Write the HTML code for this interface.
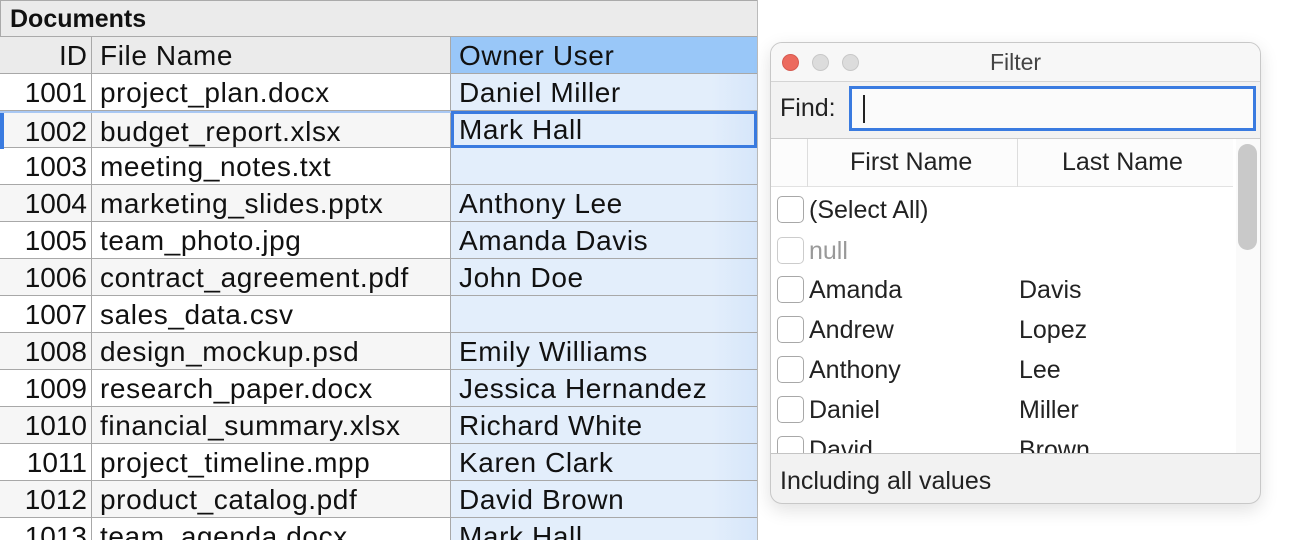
<!DOCTYPE html>
<html><head><style>
*{box-sizing:border-box;margin:0;padding:0}
html,body{width:1300px;height:540px;overflow:hidden}
body{background:#fff;position:relative;font-family:"Liberation Sans",sans-serif}
.tbl{position:absolute;left:0;top:0;width:758px;height:540px;border-right:1px solid #bbb;overflow:hidden}
.title{position:absolute;left:0;top:0;width:758px;height:37px;background:#ebebeb;border:1px solid #aaa;font-weight:bold;font-size:25px;padding:4px 9px;color:#111}
.row{position:absolute;left:0;width:757px;height:37px;border-bottom:1px solid #a8a8a8;font-size:28px;letter-spacing:0.6px;color:#111}
.row div{position:absolute;top:0;height:36px;line-height:37px;white-space:nowrap;overflow:hidden}
.c1{left:0;width:92px;text-align:right;padding-right:4px;border-right:1px solid #a8a8a8;letter-spacing:0}
.c2{left:92px;width:359px;padding-left:8px;border-right:1px solid #a8a8a8}
.c3{left:451px;width:306px;padding-left:8px;background:linear-gradient(90deg,#e3eefb 85%,#d6e6fa)}
.hdr{top:37px;background:#ebebeb}
.hdr .c3{background:#99c7f8}
.g{background:#f6f6f6}
.win{position:absolute;left:770px;top:42px;width:491px;height:462px;border:1px solid #c8c8c8;border-radius:12px;background:#f2f2f2;overflow:hidden;box-shadow:0 6px 18px rgba(0,0,0,.12);font-family:"Liberation Sans",sans-serif;color:#222}
.tb{height:39px;background:#f7f7f7;border-bottom:1px solid #d4d4d4;text-align:center;line-height:38px;font-size:23px;color:#444}
.dot{position:absolute;top:11px;width:17px;height:17px;border-radius:50%;background:#dcdcdc;border:1px solid #c8c8c8}
.find{position:absolute;top:40px;left:0;width:491px;height:54px;font-size:25px}
.list{position:absolute;top:95px;left:0;width:491px;height:316px;background:#fff;border-top:1px solid #ccc;border-bottom:1px solid #c4c4c4;overflow:hidden}
.it{position:absolute;left:0;width:460px;height:40px;font-size:25px;line-height:40px;white-space:nowrap}
.cb{position:absolute;left:6px;top:6px;width:27px;height:27px;border:1.5px solid #a8a8a8;border-radius:5px;background:#fff}
</style></head><body>
<div class="tbl">
<div class="title">Documents</div>
<div class="row hdr"><div class="c1">ID</div><div class="c2">File Name</div><div class="c3">Owner User</div></div>
<div class="row" style="top:74px"><div class="c1">1001</div><div class="c2">project_plan.docx</div><div class="c3">Daniel Miller</div></div>
<div class="row g" style="top:111px;border-top:2px solid #a9c8f3;height:37px"><div class="c1" style="border-left:4px solid #3a7be0">1002</div><div class="c2">budget_report.xlsx</div><div class="c3" style="border:3px solid #3a7be0;padding-left:5px;line-height:32px;height:37px;top:-2px">Mark Hall</div></div>
<div class="row" style="top:148px"><div class="c1">1003</div><div class="c2">meeting_notes.txt</div><div class="c3"></div></div>
<div class="row g" style="top:185px"><div class="c1">1004</div><div class="c2">marketing_slides.pptx</div><div class="c3">Anthony Lee</div></div>
<div class="row" style="top:222px"><div class="c1">1005</div><div class="c2">team_photo.jpg</div><div class="c3">Amanda Davis</div></div>
<div class="row g" style="top:259px"><div class="c1">1006</div><div class="c2">contract_agreement.pdf</div><div class="c3">John Doe</div></div>
<div class="row" style="top:296px"><div class="c1">1007</div><div class="c2">sales_data.csv</div><div class="c3"></div></div>
<div class="row g" style="top:333px"><div class="c1">1008</div><div class="c2">design_mockup.psd</div><div class="c3">Emily Williams</div></div>
<div class="row" style="top:370px"><div class="c1">1009</div><div class="c2">research_paper.docx</div><div class="c3">Jessica Hernandez</div></div>
<div class="row g" style="top:407px"><div class="c1">1010</div><div class="c2">financial_summary.xlsx</div><div class="c3">Richard White</div></div>
<div class="row" style="top:444px"><div class="c1">1011</div><div class="c2">project_timeline.mpp</div><div class="c3">Karen Clark</div></div>
<div class="row g" style="top:481px"><div class="c1">1012</div><div class="c2">product_catalog.pdf</div><div class="c3">David Brown</div></div>
<div class="row" style="top:518px"><div class="c1">1013</div><div class="c2">team_agenda.docx</div><div class="c3">Mark Hall</div></div>
</div>
<div class="win">
<div class="tb">Filter</div>
<div class="dot" style="left:11px;background:#ec6a5e;border-color:#d65a50"></div>
<div class="dot" style="left:41px"></div>
<div class="dot" style="left:71px"></div>
<div class="find"><span style="position:absolute;left:9px;top:11px">Find:</span>
<div style="position:absolute;left:78px;top:3px;width:407px;height:45px;border:3px solid #3a7be0;background:#fbfbfb"><div style="position:absolute;left:11px;top:6px;width:2px;height:28px;background:#222"></div></div></div>
<div class="list">
<div style="position:absolute;left:0;top:0;width:462px;height:48px;border-bottom:1px solid #e2e2e2;font-size:25px;background:#fcfcfc">
<div style="position:absolute;left:36px;top:0;height:48px;border-left:1px solid #ddd"></div>
<div style="position:absolute;left:246px;top:0;height:48px;border-left:1px solid #ddd"></div>
<div style="position:absolute;left:79px;top:9px">First Name</div>
<div style="position:absolute;left:291px;top:9px">Last Name</div></div>
<div style="position:absolute;left:465px;top:0;width:26px;height:316px;background:#fafafa"></div>
<div style="position:absolute;left:467px;top:5px;width:19px;height:106px;border-radius:10px;background:#c9c9c9"></div>
<div class="it" style="top:51px"><div class="cb"></div><span style="position:absolute;left:38px">(Select All)</span></div>
<div class="it" style="top:92px;color:#999"><div class="cb" style="border-color:#ccc"></div><span style="position:absolute;left:38px">null</span></div>
<div class="it" style="top:131px"><div class="cb"></div><span style="position:absolute;left:38px">Amanda</span><span style="position:absolute;left:248px">Davis</span></div>
<div class="it" style="top:171px"><div class="cb"></div><span style="position:absolute;left:38px">Andrew</span><span style="position:absolute;left:248px">Lopez</span></div>
<div class="it" style="top:211px"><div class="cb"></div><span style="position:absolute;left:38px">Anthony</span><span style="position:absolute;left:248px">Lee</span></div>
<div class="it" style="top:251px"><div class="cb"></div><span style="position:absolute;left:38px">Daniel</span><span style="position:absolute;left:248px">Miller</span></div>
<div class="it" style="top:291px"><div class="cb"></div><span style="position:absolute;left:38px">David</span><span style="position:absolute;left:248px">Brown</span></div>
</div>
<div style="position:absolute;left:9px;top:424px;font-size:25px">Including all values</div>
</div>
</body></html>
